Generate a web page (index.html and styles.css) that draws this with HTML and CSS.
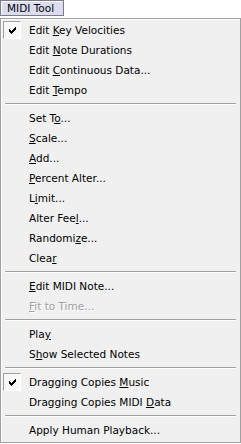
FILE: index.html
```
<!DOCTYPE html>
<html>
<head>
    <meta name='viewport' content='width=device-width, initial-scale=1.0'>
    <title>MIDI Tool</title>
    <link rel="stylesheet" href="styles.css">
</head>
<body>
    <div class='title-btn'>MIDI Tool</div>
    <div class='menu'>
        <div class='item checked'>
            <span class='check'><svg width='7' height='7' viewBox='0 0 7 7' shape-rendering='crispEdges'><path d='M6 0h1v1h-1zM5 1h2v1h-2zM0 2h1v1h-1zM4 2h3v1h-3zM0 3h2v1h-2zM3 3h3v1h-3zM0 4h5v1h-5zM1 5h3v1h-3zM2 6h1v1h-1z' fill='#000'/></svg></span>
            Edit <u>K</u>ey Velocities
        </div>
        <div class='item'>Edit <u>N</u>ote Durations</div>
        <div class='item'>Edit <u>C</u>ontinuous Data...</div>
        <div class='item'>Edit <u>T</u>empo</div>
        <div class='sep'></div>
        <div class='item'>Set T<u>o</u>...</div>
        <div class='item'><u>S</u>cale...</div>
        <div class='item'><u>A</u>dd...</div>
        <div class='item'><u>P</u>ercent Alter...</div>
        <div class='item'>L<u>i</u>mit...</div>
        <div class='item'>Alter Fee<u>l</u>...</div>
        <div class='item'>Randomi<u>z</u>e...</div>
        <div class='item'>Clea<u>r</u></div>
        <div class='sep'></div>
        <div class='item'><u>E</u>dit MIDI Note...</div>
        <div class='item disabled'><u>F</u>it to Time...</div>
        <div class='sep'></div>
        <div class='item'>Pla<u>y</u></div>
        <div class='item'>S<u>h</u>ow Selected Notes</div>
        <div class='sep'></div>
        <div class='item checked'>
            <span class='check'><svg width='7' height='7' viewBox='0 0 7 7' shape-rendering='crispEdges'><path d='M6 0h1v1h-1zM5 1h2v1h-2zM0 2h1v1h-1zM4 2h3v1h-3zM0 3h2v1h-2zM3 3h3v1h-3zM0 4h5v1h-5zM1 5h3v1h-3zM2 6h1v1h-1z' fill='#000'/></svg></span>
            Dragging Copies <u>M</u>usic
        </div>
        <div class='item'>Dragging Copies MIDI <u>D</u>ata</div>
        <div class='sep'></div>
        <div class='item'>Apply Human Playback...</div>
    </div>
</body>
</html>
```

FILE: styles.css
```
body {
    margin: 0;
    background-color: white;
    font-family: "DejaVu Sans", Verdana, sans-serif;
    font-size: 10.5px;
    color: #000;
}
.title-btn {
    display: inline-block;
    box-sizing: border-box;
    width: 64px;
    height: 16px;
    line-height: 14px;
    padding-left: 6px;
    border: 1px solid #7a7a8c;
    background-color: #dcdcef;
    box-shadow: inset 1px 1px 0 #fff;
    vertical-align: top;
}
.menu {
    margin-top: 2px;
    box-sizing: border-box;
    width: 241px;
    padding: 1px 1px 2px 1px;
    border: 1px solid #a0a0a0;
    background-color: #f0f0f0;
    box-shadow: inset 1px 1px 0 #fff;
}
.item {
    position: relative;
    height: 20px;
    line-height: 20px;
    padding-left: 27px;
    white-space: nowrap;
}
.item u {
    text-underline-offset: 1px;
}
.check {
    position: absolute;
    left: 1px;
    top: 1px;
    box-sizing: border-box;
    width: 18px;
    height: 18px;
    display: flex;
    align-items: center;
    justify-content: center;
    border-top: 1px solid #a0a0a0;
    border-left: 1px solid #a0a0a0;
    border-right: 1px solid #fff;
    border-bottom: 1px solid #fff;
    background-color: #f8f8f8;
}
.disabled {
    color: #a0a0a0;
    text-shadow: 1px 1px 0 #fff;
}
.sep {
    height: 8px;
    margin: 0 3px;
    display: flex;
    flex-direction: column;
    justify-content: center;
}
.sep::before {
    content: '';
    display: block;
    height: 1px;
    background-color: #a0a0a0;
    border-bottom: 1px solid #fff;
}
```
